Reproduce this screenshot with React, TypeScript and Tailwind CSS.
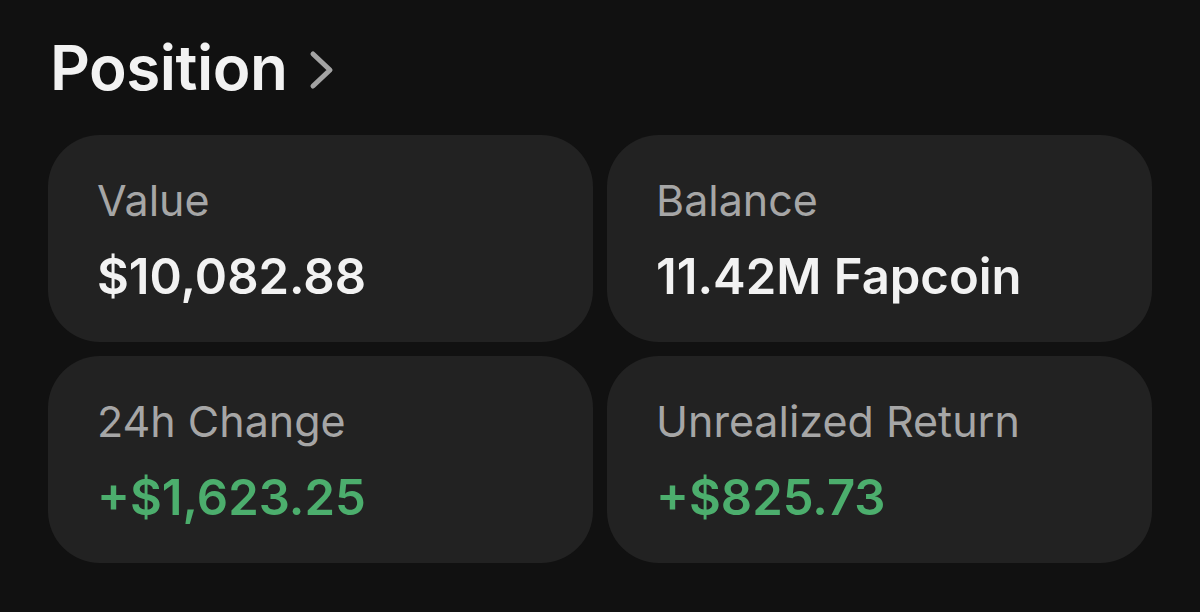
const stats = [
  { label: 'Value', value: '$10,082.88', positive: false },
  { label: 'Balance', value: '11.42M Fapcoin', positive: false },
  { label: '24h Change', value: '+$1,623.25', positive: true },
  { label: 'Unrealized Return', value: '+$825.73', positive: true },
];

const StatCard = ({ label, value, positive }: { label: string; value: string; positive: boolean }) => (
  <div className="h-[207px] rounded-[52px] bg-[#222222] pl-[49px] pt-[44px]">
    <div className="text-[43px] leading-none text-[#a6a6a6]">{label}</div>
    <div
      className={`mt-[30px] text-[49px] font-semibold leading-none ${
        positive ? 'text-[#4cae6d]' : 'text-[#f2f2f2]'
      }`}
    >
      {value}
    </div>
  </div>
);

export default function App() {
  return (
    <div
      className="h-[612px] w-[1200px] overflow-hidden bg-[#111111] px-[48px] pt-[37px]"
      style={{ fontFamily: 'Inter, "Noto Sans", sans-serif' }}
    >
      {/* Header */}
      <div className="flex items-center gap-[22px] pl-[2px]">
        <h1 className="text-[62px] font-semibold leading-none tracking-[-0.5px] text-[#f2f2f2]">Position</h1>
        <svg width="26" height="40" viewBox="0 0 26 40" className="mt-[4px]">
          <polyline
            points="4,4 21,20 4,36"
            fill="none"
            stroke="#a3a3a3"
            strokeWidth="5"
            strokeLinecap="round"
            strokeLinejoin="round"
          />
        </svg>
      </div>

      {/* Stats */}
      <div className="mt-[36px] grid grid-cols-2 gap-[14px]">
        {stats.map((s) => (
          <StatCard key={s.label} {...s} />
        ))}
      </div>
    </div>
  );
}
